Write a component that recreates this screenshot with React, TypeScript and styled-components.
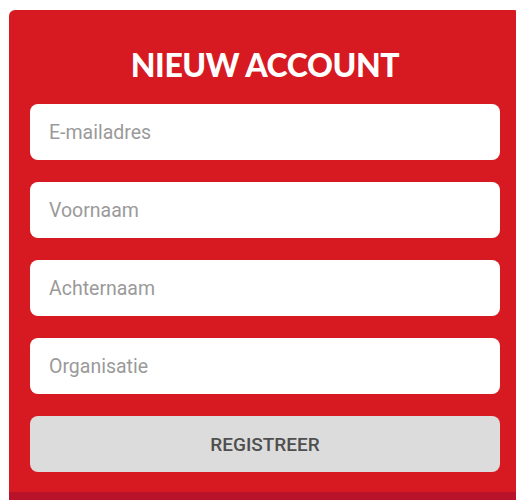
import styled, { createGlobalStyle } from 'styled-components';

const GlobalStyle = createGlobalStyle`
  html, body {
    margin: 0;
    padding: 0;
    background: #ffffff;
    overflow: hidden;
  }
  * { box-sizing: border-box; }
`;

const Page = styled.main`
  padding: 10px 0 0 9px;
  width: 516px;
  height: 500px;
  overflow: hidden;
`;

const Panel = styled.section`
  width: 511px;
  background: #d71921;
  border-radius: 6px 6px 0 0;
  padding: 37px 20px 20px 21px;
  border-bottom: 12px solid #b9132b;
`;

const Title = styled.h1`
  margin: 0 0 21px;
  text-align: center;
  color: #ffffff;
  font-family: Lato, "Open Sans", sans-serif;
  font-weight: 900;
  font-size: 32px;
  line-height: 36px;
  letter-spacing: -0.4px;
`;

const Form = styled.form`
  display: flex;
  flex-direction: column;
  gap: 22px;
`;

const Field = styled.input`
  height: 56px;
  width: 470px;
  border: none;
  border-radius: 8px;
  background: #ffffff;
  padding: 0 19px;
  font-family: Roboto, "Liberation Sans", sans-serif;
  font-size: 19.5px;
  color: #333;
  outline: none;

  &::placeholder {
    color: #9a9a9a;
  }
`;

const Submit = styled.button`
  height: 56px;
  width: 470px;
  border: none;
  border-radius: 8px;
  background: #dcdcdc;
  font-family: Roboto, "Liberation Sans", sans-serif;
  font-weight: 500;
  font-size: 19px;
  color: #4f4f4f;
  text-transform: uppercase;
  cursor: pointer;
`;

const fields = ['E-mailadres', 'Voornaam', 'Achternaam', 'Organisatie'];

export default function App() {
  return (
    <>
      <GlobalStyle />
      <Page>
        <Panel>
          <Title>NIEUW ACCOUNT</Title>
          <Form onSubmit={(e) => e.preventDefault()}>
            {fields.map((f) => (
              <Field key={f} placeholder={f} />
            ))}
            <Submit type="submit">Registreer</Submit>
          </Form>
        </Panel>
      </Page>
    </>
  );
}
